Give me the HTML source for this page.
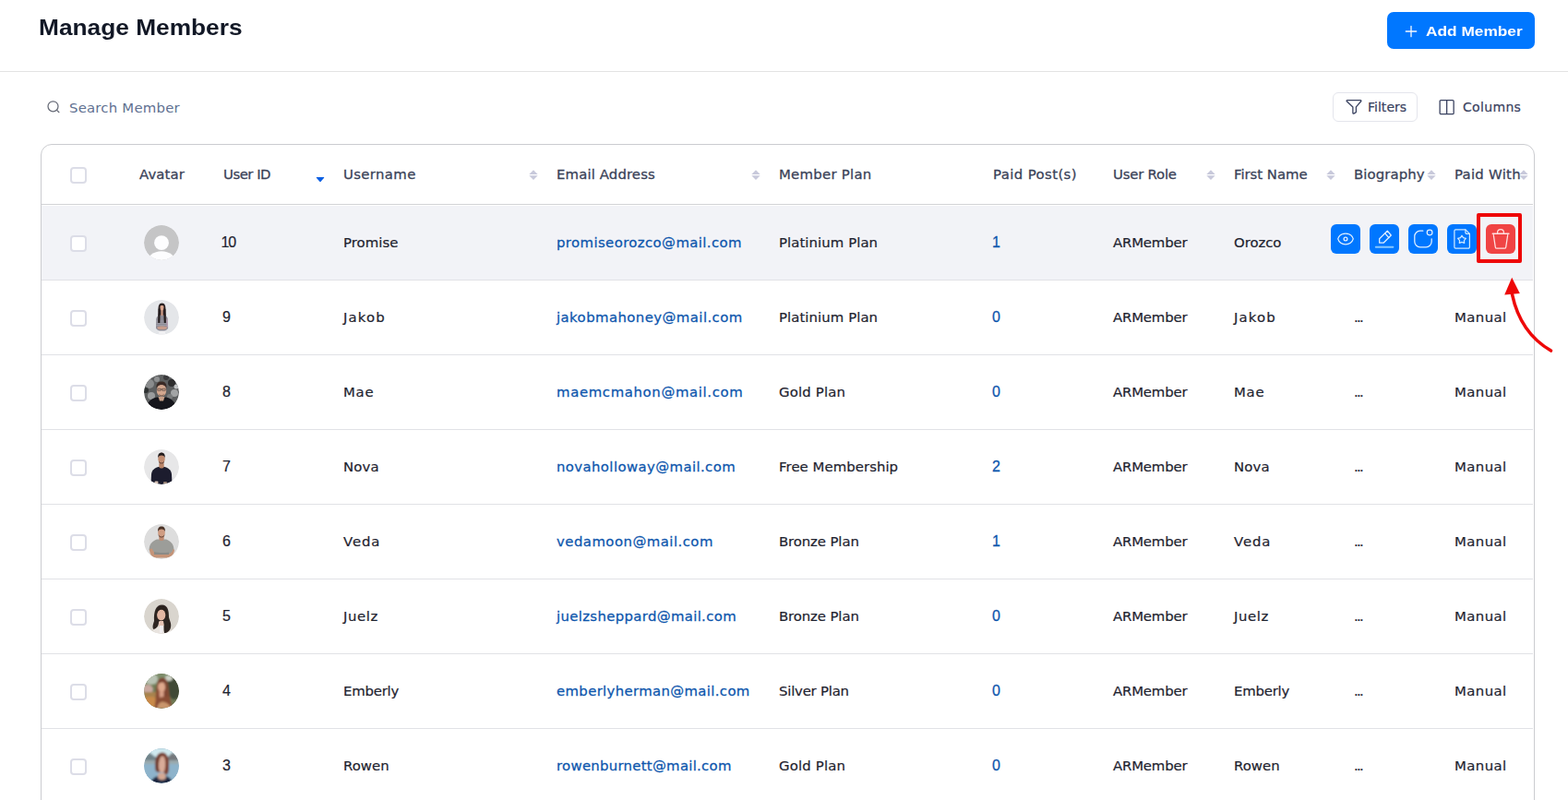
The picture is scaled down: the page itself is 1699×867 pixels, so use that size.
<!DOCTYPE html>
<html lang="en">
<head>
<meta charset="utf-8">
<title>Manage Members</title>
<style>
*{box-sizing:border-box;margin:0;padding:0}
html,body{width:1699px;height:867px;overflow:hidden;background:#fff}
body{font-family:"DejaVu Sans","Liberation Sans",sans-serif;font-size:14.9px;color:#1f2430;position:relative}
.topbar{position:absolute;left:0;top:0;width:1699px;height:78px;border-bottom:1px solid #e3e3e3;background:#fff}
.topbar h1{position:absolute;left:42px;top:13px;font-family:"Liberation Sans",sans-serif;font-weight:700;font-size:24px;line-height:34px;color:#121826;white-space:nowrap}
.topbar h1 span{display:inline-block;transform:scaleX(1.095);transform-origin:0 50%}
.add-btn{position:absolute;left:1503px;top:13px;width:160px;height:40px;border-radius:7px;background:#0077ff;color:#fff;font-family:"Liberation Sans",sans-serif;font-weight:700;font-size:15.5px;line-height:40px;white-space:nowrap}
.add-btn svg{position:absolute;left:19px;top:14px}
.add-btn span{position:absolute;left:42px;top:1px;transform:scaleX(1.115);transform-origin:0 50%}
.toolbar{position:absolute;left:0;top:78px;width:1699px;height:78px}
.search{position:absolute;left:51px;top:31px;height:16px}
.search svg{position:absolute;left:0;top:0}
.search span{position:absolute;left:24px;top:-1px;line-height:18px;color:#617191;white-space:nowrap}
.tbtn{position:absolute;top:22px;height:32px;border-radius:6px;font-size:14px;line-height:30px;color:#3a4260;white-space:nowrap}
.tbtn svg{position:absolute;top:6px}
.tbtn span{position:absolute;top:0;-webkit-text-stroke:.22px currentColor}
.filters{left:1444px;width:92px;border:1px solid #e4e5ec}
.filters svg{left:13px}
.filters span{left:37px}
.columns{left:1546px;width:116px;border:1px solid transparent}
.columns svg{left:12px}
.columns span{left:38px}
.grid{position:absolute;left:44px;top:156px;width:1619px;height:730px;border:1px solid #cbccd0;border-radius:12px;overflow:hidden;background:#fff}
table{border-collapse:separate;border-spacing:0;table-layout:fixed;width:1616px}
th span,td span{display:inline-block;-webkit-text-stroke:.22px currentColor}
th span{-webkit-text-stroke-width:.28px}
td a span,td.num span{-webkit-text-stroke-width:.26px}
th,td{text-align:left;vertical-align:middle;padding:0 0 0 11px;white-space:nowrap;overflow:visible;position:relative}
thead th{height:65px;font-weight:400;color:#3a4258;border-bottom:1px solid #d2d3d6;font-size:14.9px}
tbody td{height:81px;border-bottom:1px solid #e1e2e6;color:#1f2430}
tbody tr:first-child td{height:82px;border-top:1px solid #fff}
tbody tr.hov td{background:#f2f3f7}
td a{color:#0d56ad;text-decoration:none}
td.num{color:#0d56ad}
.n{font-family:"Liberation Sans",sans-serif;font-size:16px;position:relative;top:0;margin-left:-1px}
.cb{display:block;width:18px;height:18px;border:2px solid #dcdde7;border-radius:4px;background:#fff;margin-left:20px;position:relative;top:1px}
.av{display:block;width:38px;height:38px;border-radius:50%;overflow:hidden;margin-left:5px}
.av svg{display:block}
.sort{position:absolute;right:9.5px;top:27px;width:10px;height:12px;overflow:visible}
th.last .sort{right:5px}
.actions{position:absolute;left:1397px;top:86px;width:220px;height:32px}
.ab{position:absolute;top:0;width:32px;height:32px;border-radius:6px;background:#0077ff}
.ab.del{background:#f04444}
.ab svg{position:absolute;left:0;top:0}
.hl{position:absolute;left:1600px;top:231px;width:49px;height:54px;border:4px solid #ee0808;border-radius:2px}
.arrow{position:absolute;left:1620px;top:295px}
</style>
</head>
<body>
<div class="topbar">
  <h1><span>Manage Members</span></h1>
  <div class="add-btn">
    <svg width="14" height="14" viewBox="0 0 14 14"><path d="M7 1.3v11.4M1.3 7h11.4" stroke="#f4f9ff" stroke-width="1.3" stroke-linecap="round" fill="none"/></svg>
    <span>Add Member</span>
  </div>
</div>
<div class="toolbar">
  <div class="search">
    <svg width="16" height="16" viewBox="0 0 16 16"><circle cx="6.5" cy="6.3" r="5.5" fill="none" stroke="#666a76" stroke-width="1.25"/><path d="M10.6 10.4l2.3 2.3" stroke="#666a76" stroke-width="1.25" stroke-linecap="round"/></svg>
    <span style="letter-spacing:0.21px">Search Member</span>
  </div>
  <div class="tbtn filters">
    <svg width="18" height="18" viewBox="0 0 18 18"><path d="M1.7 1.7h14.6a.6.6 0 0 1 .45 1l-5.35 6.2v5.3a.8.8 0 0 1-.4.7l-2.2 1.2a.6.6 0 0 1-.9-.5V8.9L1.25 2.7a.6.6 0 0 1 .45-1z" fill="none" stroke="#3a4260" stroke-width="1.3" stroke-linejoin="round"/></svg>
    <span style="letter-spacing:0.02px">Filters</span>
  </div>
  <div class="tbtn columns">
    <svg width="18" height="18" viewBox="0 0 18 18"><rect x="1.15" y="1.65" width="15" height="15" rx="1.2" fill="none" stroke="#3a4260" stroke-width="1.3"/><path d="M8.65 1.65v15" stroke="#3a4260" stroke-width="1.3"/></svg>
    <span style="letter-spacing:0.33px">Columns</span>
  </div>
</div>
<div class="grid">
<table>
<colgroup><col style="width:95px"><col style="width:91px"><col style="width:130px"><col style="width:231px"><col style="width:241px"><col style="width:232px"><col style="width:130px"><col style="width:131px"><col style="width:130px"><col style="width:109px"><col style="width:96px"></colgroup>
<thead><tr>
<th><span class="cb"></span></th>
<th><span style="letter-spacing:0.12px">Avatar</span></th>
<th><span style="letter-spacing:-0.5px">User ID</span><svg class="sort" viewBox="0 0 10 12"><path d="M1.2 8.1h7.6a.45.45 0 0 1 .33.76L5.4 12.9a.55.55 0 0 1-.8 0L.87 8.86a.45.45 0 0 1 .33-.760z" fill="#0a5fe3"/></svg></th>
<th><span style="letter-spacing:0.35px">Username</span><svg class="sort" viewBox="0 0 10 12"><path d="M5 .2 9.7 5.1H.3zM5 11.1.3 6.2h9.4z" fill="#c8c9db"/></svg></th>
<th><span style="letter-spacing:0.12px">Email Address</span><svg class="sort" viewBox="0 0 10 12"><path d="M5 .2 9.7 5.1H.3zM5 11.1.3 6.2h9.4z" fill="#c8c9db"/></svg></th>
<th><span style="letter-spacing:0.26px">Member Plan</span></th>
<th><span style="letter-spacing:0.39px">Paid Post(s)</span></th>
<th><span style="letter-spacing:-0.22px">User Role</span><svg class="sort" viewBox="0 0 10 12"><path d="M5 .2 9.7 5.1H.3zM5 11.1.3 6.2h9.4z" fill="#c8c9db"/></svg></th>
<th><span style="letter-spacing:-0.04px">First Name</span><svg class="sort" viewBox="0 0 10 12"><path d="M5 .2 9.7 5.1H.3zM5 11.1.3 6.2h9.4z" fill="#c8c9db"/></svg></th>
<th><span style="letter-spacing:0.09px">Biography</span><svg class="sort" viewBox="0 0 10 12"><path d="M5 .2 9.7 5.1H.3zM5 11.1.3 6.2h9.4z" fill="#c8c9db"/></svg></th>
<th class="last"><span style="letter-spacing:0.25px">Paid With</span><svg class="sort" viewBox="0 0 10 12"><path d="M5 .2 9.7 5.1H.3zM5 11.1.3 6.2h9.4z" fill="#c8c9db"/></svg></th>
</tr></thead>
<tbody>
<tr class="hov"><td><span class="cb"></span></td><td><span class="av"><svg width="38" height="38" viewBox="0 0 38 38"><defs><clipPath id="c10"><circle cx="19" cy="19" r="19"/></clipPath><filter id="f10" x="-20%" y="-20%" width="140%" height="140%"><feGaussianBlur stdDeviation="0.35"/></filter></defs><g clip-path="url(#c10)"><rect width="38" height="38" fill="#c5c5c6"/><g filter="url(#f10)" fill="#fdfdfe"><circle cx="19" cy="19.2" r="7.9"/><ellipse cx="19" cy="40.5" rx="15.5" ry="12.2"/></g></g></svg></span></td><td><span class="n" style="letter-spacing:-1.2px;margin-left:-2.5px">10</span></td><td><span style="letter-spacing:0.04px">Promise</span></td><td><a><span style="letter-spacing:0.39px">promiseorozco@mail.com</span></a></td><td><span style="letter-spacing:0.07px">Platinium Plan</span></td><td class="num"><span class="n">1</span></td><td><span style="letter-spacing:-0.17px">ARMember</span></td><td><span style="letter-spacing:-0.06px">Orozco</span></td><td></td><td></td></tr>
<tr><td><span class="cb"></span></td><td><span class="av"><svg width="38" height="38" viewBox="0 0 38 38"><defs><clipPath id="c9"><circle cx="19" cy="19" r="19"/></clipPath><filter id="f9" x="-20%" y="-20%" width="140%" height="140%"><feGaussianBlur stdDeviation="0.5"/></filter></defs><g clip-path="url(#c9)"><rect width="38" height="38" fill="#e4e6e9"/><g filter="url(#f9)"><path d="M16.2 33 L22.8 33 L23.2 38 L16 38 Z" fill="#f1f1f3"/><path d="M19.5 3.5 C22.8 3.5 23.6 7 23.5 11 C23.5 16 24.2 20 23.8 25 L15.3 25 C14.9 20 15.6 16 15.5 11 C15.4 7 16.2 3.5 19.5 3.5 Z" fill="#2b2224"/><path d="M13.2 21 C13.4 18.5 15 17.3 17.5 16.6 L21.6 16.6 C24 17.3 25.6 18.5 25.8 21 L26.1 30.5 C25.5 32.5 23.5 33.6 19.6 33.6 C15.6 33.6 13.6 32.5 13 30.5 Z" fill="#8d8b95"/><path d="M13.3 23 H25.9 M13.2 25.4 H26 M13.2 27.6 H26" stroke="#a9a7b2" stroke-width=".7" fill="none"/><path d="M24.3 21 L25.9 21 L26.1 30 L24.6 30 Z" fill="#b79bb0" opacity=".8"/><rect x="18.3" y="10.5" width="2.4" height="6.5" fill="#c99884"/><ellipse cx="19.5" cy="8.4" rx="2.1" ry="2.9" fill="#dba78f"/><path d="M17.3 7.5 C17.3 5.5 18.2 4.6 19.5 4.6 C20.8 4.6 21.7 5.5 21.7 7.5 C21 6.3 20.4 5.9 19.5 5.9 C18.6 5.9 18 6.3 17.3 7.5 Z" fill="#2b2224"/><path d="M15.6 10 L17.5 8 C17.3 12 17.8 18 17.3 25 L15.3 25 C15 20 15.7 15 15.6 10 Z" fill="#241b1d"/><path d="M23.4 10 L21.5 8 C21.7 12 21.2 18 21.8 25 L23.8 25 C24.1 20 23.3 15 23.4 10 Z" fill="#241b1d"/><path d="M14.5 29.2 C17 28.3 22 28.3 24.8 29.2 L24.6 31.4 C22 32.2 17 32.2 14.7 31.4 Z" fill="#c79c8c"/></g></g></svg></span></td><td><span class="n">9</span></td><td><span style="letter-spacing:1.14px">Jakob</span></td><td><a><span style="letter-spacing:0.42px">jakobmahoney@mail.com</span></a></td><td><span style="letter-spacing:0.07px">Platinium Plan</span></td><td class="num"><span class="n">0</span></td><td><span style="letter-spacing:-0.17px">ARMember</span></td><td><span style="letter-spacing:1.14px">Jakob</span></td><td><span class="dots" style="letter-spacing:-1.7px">...</span></td><td><span style="letter-spacing:0.42px">Manual</span></td></tr>
<tr><td><span class="cb"></span></td><td><span class="av"><svg width="38" height="38" viewBox="0 0 38 38"><defs><clipPath id="c8"><circle cx="19" cy="19" r="19"/></clipPath><filter id="f8" x="-20%" y="-20%" width="140%" height="140%"><feGaussianBlur stdDeviation="0.7"/></filter></defs><g clip-path="url(#c8)"><rect width="38" height="38" fill="#5d5f60"/><g filter="url(#f8)"><circle cx="6" cy="10" r="5" fill="#8a8c8d"/><circle cx="30" cy="9" r="4" fill="#2d2e2f"/><circle cx="33" cy="20" r="4" fill="#a2a4a5"/><circle cx="8" cy="23" r="4" fill="#9a9c9d"/><circle cx="14" cy="5" r="3" fill="#8f9192"/><circle cx="24" cy="3" r="3" fill="#3a3b3c"/><circle cx="2" cy="17" r="3" fill="#2f3031"/><circle cx="35" cy="13" r="2.5" fill="#c2c4c5"/><circle cx="28" cy="24" r="3" fill="#7a7c7d"/><path d="M2 38 C3 29 9 25.5 14 24.5 L24 24.5 C29 25.5 34 29 36 38 Z" fill="#15161a"/><path d="M15.5 24 L22.5 24 L21 28.5 L17 28.5 Z" fill="#c79f88"/><ellipse cx="19" cy="17" rx="5.2" ry="6.6" fill="#d3a78f"/><path d="M13.6 15 C13 10 15 7.5 19 7.5 C23 7.5 25 10 24.4 15 C23.5 12 21.5 11 19 11 C16.5 11 14.5 12 13.6 15 Z" fill="#3a2a25"/><path d="M14.8 15.3h3.3v2h-3.3zM19.9 15.3h3.3v2h-3.3zM18.1 15.9h1.8" fill="none" stroke="#2c2424" stroke-width=".6" opacity=".85"/><path d="M16 21 C17.5 22.5 20.5 22.5 22 21 L21.5 22.5 C20.5 23.5 17.5 23.5 16.5 22.5 Z" fill="#8c6a5a"/></g></g></svg></span></td><td><span class="n">8</span></td><td><span style="letter-spacing:0.76px">Mae</span></td><td><a><span style="letter-spacing:0.63px">maemcmahon@mail.com</span></a></td><td><span style="letter-spacing:0.16px">Gold Plan</span></td><td class="num"><span class="n">0</span></td><td><span style="letter-spacing:-0.17px">ARMember</span></td><td><span style="letter-spacing:0.76px">Mae</span></td><td><span class="dots" style="letter-spacing:-1.7px">...</span></td><td><span style="letter-spacing:0.42px">Manual</span></td></tr>
<tr><td><span class="cb"></span></td><td><span class="av"><svg width="38" height="38" viewBox="0 0 38 38"><defs><clipPath id="c7"><circle cx="19" cy="19" r="19"/></clipPath><filter id="f7" x="-20%" y="-20%" width="140%" height="140%"><feGaussianBlur stdDeviation="0.6"/></filter></defs><g clip-path="url(#c7)"><rect width="38" height="38" fill="#e7e7e8"/><g filter="url(#f7)"><path d="M7.5 38 L8 27 C8.5 22 12 20 15.5 19 L22.5 19 C26 20 29.5 22 30 27 L30.5 38 Z" fill="#1c1e2d"/><rect x="16.3" y="14" width="5.4" height="6.5" rx="2" fill="#b98468"/><ellipse cx="19" cy="10.5" rx="3.7" ry="4.8" fill="#c18c70"/><path d="M15.2 9.5 C14.8 5.5 16.5 3.5 19 3.5 C21.5 3.5 23.2 5.5 22.8 9.5 C22.3 7.5 21 6.6 19 6.6 C17 6.6 15.7 7.5 15.2 9.5 Z" fill="#241c1c"/><path d="M16 12.5 C17 15 21 15 22 12.5 L21.8 14 C21 16 17 16 16.2 14 Z" fill="#6b4a3c"/><rect x="11.5" y="34.5" width="4" height="2.5" rx="1" fill="#d9c4b8"/><rect x="21" y="35" width="4" height="2.5" rx="1" fill="#9a8478"/></g></g></svg></span></td><td><span class="n">7</span></td><td><span style="letter-spacing:0.17px">Nova</span></td><td><a><span style="letter-spacing:0.39px">novaholloway@mail.com</span></a></td><td><span style="letter-spacing:0.05px">Free Membership</span></td><td class="num"><span class="n">2</span></td><td><span style="letter-spacing:-0.17px">ARMember</span></td><td><span style="letter-spacing:0.17px">Nova</span></td><td><span class="dots" style="letter-spacing:-1.7px">...</span></td><td><span style="letter-spacing:0.42px">Manual</span></td></tr>
<tr><td><span class="cb"></span></td><td><span class="av"><svg width="38" height="38" viewBox="0 0 38 38"><defs><clipPath id="c6"><circle cx="19" cy="19" r="19"/></clipPath><filter id="f6" x="-20%" y="-20%" width="140%" height="140%"><feGaussianBlur stdDeviation="0.6"/></filter></defs><g clip-path="url(#c6)"><rect width="38" height="38" fill="#dddddd"/><g filter="url(#f6)"><path d="M5.5 28 C6 21 9 18.5 14 16.5 L24 16.5 C29 18.5 32 21 32.5 28 L29 32 L9 32 Z" fill="#9c9d99"/><path d="M6 27 L9 26.5 C10 30 12 32.5 18 33 L28 32 C30 31 31 29 31.5 27 L33 28 C32.5 33 30 36 24 36.5 L13 36.5 C8 36 6 32 6 27 Z" fill="#c59478"/><path d="M11 30 C15 31 22 31.5 27 30.5 L27 33 L11 33 Z" fill="#8a8b87"/><rect x="16.3" y="12.5" width="5.4" height="5.5" rx="2" fill="#c08c72"/><ellipse cx="19" cy="9.2" rx="3.8" ry="4.8" fill="#cf9c82"/><path d="M15.1 8.5 C14.6 4.3 16.4 2.6 19 2.6 C21.6 2.6 23.4 4.3 22.9 8.5 C22.4 6.4 21 5.6 19 5.6 C17 5.6 15.6 6.4 15.1 8.5 Z" fill="#4a3328"/><path d="M15.6 10.5 C16.5 14.5 21.5 14.5 22.4 10.5 L22.2 12.5 C21.3 15.3 16.7 15.3 15.8 12.5 Z" fill="#6e4a3a"/></g></g></svg></span></td><td><span class="n">6</span></td><td><span style="letter-spacing:0.91px">Veda</span></td><td><a><span style="letter-spacing:0.46px">vedamoon@mail.com</span></a></td><td><span style="letter-spacing:-0.11px">Bronze Plan</span></td><td class="num"><span class="n">1</span></td><td><span style="letter-spacing:-0.17px">ARMember</span></td><td><span style="letter-spacing:0.91px">Veda</span></td><td><span class="dots" style="letter-spacing:-1.7px">...</span></td><td><span style="letter-spacing:0.42px">Manual</span></td></tr>
<tr><td><span class="cb"></span></td><td><span class="av"><svg width="38" height="38" viewBox="0 0 38 38"><defs><clipPath id="c5"><circle cx="19" cy="19" r="19"/></clipPath><filter id="f5" x="-20%" y="-20%" width="140%" height="140%"><feGaussianBlur stdDeviation="0.7"/></filter></defs><g clip-path="url(#c5)"><rect width="38" height="38" fill="#d9d5ce"/><g filter="url(#f5)"><path d="M9 38 C10 32 14 30 18.5 29.5 C24 30 29 32 31 38 Z" fill="#e9e4df"/><path d="M11 24 C10.5 13 13 6.5 19.5 6.5 C26 6.5 27 13 27 20 C28 24 30 27 29 31 C28 35 25 37 22 37 C21 33 22 29 21 25 L16 25 C16 29 14 32 10.5 33 C8.5 31 10 27 11 24 Z" fill="#2f2521"/><ellipse cx="18.7" cy="17.5" rx="4.6" ry="6" fill="#e3b7a3"/><path d="M14 16 C14 10.5 16.5 8 19.5 8 C22.5 8 24.5 10.5 24.5 16 C23 13 21.5 11.5 19 11.5 C16.5 11.5 15 13 14 16 Z" fill="#2a201d"/><path d="M16.5 24 L21 24 L21.5 29 L18.5 33 L16 29 Z" fill="#e8c5b6"/><path d="M17 29 L21 29 L20 37 L17 37 Z" fill="#f2eef0"/></g></g></svg></span></td><td><span class="n">5</span></td><td><span style="letter-spacing:0.62px">Juelz</span></td><td><a><span style="letter-spacing:0.33px">juelzsheppard@mail.com</span></a></td><td><span style="letter-spacing:-0.11px">Bronze Plan</span></td><td class="num"><span class="n">0</span></td><td><span style="letter-spacing:-0.17px">ARMember</span></td><td><span style="letter-spacing:0.62px">Juelz</span></td><td><span class="dots" style="letter-spacing:-1.7px">...</span></td><td><span style="letter-spacing:0.42px">Manual</span></td></tr>
<tr><td><span class="cb"></span></td><td><span class="av"><svg width="38" height="38" viewBox="0 0 38 38"><defs><clipPath id="c4"><circle cx="19" cy="19" r="19"/></clipPath><filter id="f4" x="-20%" y="-20%" width="140%" height="140%"><feGaussianBlur stdDeviation="0.8"/></filter></defs><g clip-path="url(#c4)"><rect width="38" height="38" fill="#6f7a55"/><g filter="url(#f4)"><rect x="0" y="0" width="38" height="12" fill="#7d8e6c"/><ellipse cx="8" cy="6" rx="7" ry="6" fill="#b9c3b4"/><ellipse cx="33" cy="14" rx="8" ry="14" fill="#3f4a34"/><ellipse cx="4" cy="17" rx="6" ry="5" fill="#c9a9a0"/><rect x="0" y="20" width="16" height="18" fill="#a8834e"/><ellipse cx="7" cy="31" rx="9" ry="6" fill="#c98a4a"/><ellipse cx="27" cy="5" rx="4" ry="3" fill="#cfd3c8"/><path d="M12.5 30 C13 20 13 12 15.5 7 C17.5 3.5 22.5 3.5 24.5 7 C27 12 26.5 20 28 26 C29 30 30 33 30 38 L12 38 C11.5 35 12 33 12.5 30 Z" fill="#8a4d35"/><path d="M14 38 C15 33 17 31 20 30.5 C24 31 28 33 29.5 38 Z" fill="#c9956c"/><ellipse cx="19.2" cy="14.3" rx="4" ry="5.8" fill="#e0a98d"/><path d="M15 12 C15.5 7 17.5 5 20 5 C23 5 25 8 25 14 C25 18 24.5 21 25.5 25 L22 24 C23 20 23.5 15 22.5 11 C21 9 18 9 15 12 Z" fill="#7a4330"/><path d="M16.5 19.5 L21.5 19.5 L21.5 25 L17 26 Z" fill="#d8a088"/></g></g></svg></span></td><td><span class="n">4</span></td><td><span style="letter-spacing:-0.22px">Emberly</span></td><td><a><span style="letter-spacing:0.34px">emberlyherman@mail.com</span></a></td><td><span style="letter-spacing:-0.22px">Silver Plan</span></td><td class="num"><span class="n">0</span></td><td><span style="letter-spacing:-0.17px">ARMember</span></td><td><span style="letter-spacing:-0.22px">Emberly</span></td><td><span class="dots" style="letter-spacing:-1.7px">...</span></td><td><span style="letter-spacing:0.42px">Manual</span></td></tr>
<tr><td><span class="cb"></span></td><td><span class="av"><svg width="38" height="38" viewBox="0 0 38 38"><defs><clipPath id="c3"><circle cx="19" cy="19" r="19"/></clipPath><filter id="f3" x="-20%" y="-20%" width="140%" height="140%"><feGaussianBlur stdDeviation="0.8"/></filter></defs><g clip-path="url(#c3)"><rect width="38" height="38" fill="#8fb2c6"/><g filter="url(#f3)"><rect x="0" y="0" width="38" height="9" fill="#cfe9ef"/><path d="M0 10 L6 4.5 L13 10 L13 15 L0 15 Z" fill="#6f8288"/><path d="M25 10 L31 4.5 L38 9 L38 15 L25 15 Z" fill="#75787c"/><rect x="0" y="13" width="38" height="4" fill="#9aa9ad"/><rect x="0" y="17" width="38" height="21" fill="#8db3cb"/><path d="M7 38 C8 33 12 30.5 16 30 L23 30 C27 30.5 30 33 31 38 Z" fill="#1c2740"/><path d="M15.5 27 L22.5 27 L24 32 C22 35 17 35 15 32 Z" fill="#d4a893"/><path d="M12.5 24 C11 14 13 4.5 19.5 4.5 C26 4.5 27.5 12 27 21 C27 25 26 28.5 24 29 L21.5 26 L16.5 25.5 C15.5 26 14 26 12.5 24 Z" fill="#7a4030"/><path d="M15.5 12 C16.5 8.5 20 7.5 22 9.5 C23.5 13 23.5 19 22.5 23.5 C21.5 26.5 19 27 17.5 25.5 C15.5 22.5 15 16 15.5 12 Z" fill="#d9ab98"/><path d="M14 13 C15 7 18 5.5 20.5 6 C18.5 8 16.5 11 16 16 C15.5 19 15.8 22 16.5 25 L13.5 24 C12.8 20 13.2 16 14 13 Z" fill="#6c3829"/></g></g></svg></span></td><td><span class="n">3</span></td><td><span style="letter-spacing:0.04px">Rowen</span></td><td><a><span style="letter-spacing:0.27px">rowenburnett@mail.com</span></a></td><td><span style="letter-spacing:0.16px">Gold Plan</span></td><td class="num"><span class="n">0</span></td><td><span style="letter-spacing:-0.17px">ARMember</span></td><td><span style="letter-spacing:0.04px">Rowen</span></td><td><span class="dots" style="letter-spacing:-1.7px">...</span></td><td><span style="letter-spacing:0.42px">Manual</span></td></tr>
</tbody>
</table>
<div class="actions">
  <div class="ab" style="left:0"><svg width="32" height="32" viewBox="0 0 32 32" fill="none" stroke="#e3f1ff" stroke-width="1.25" stroke-linecap="round" stroke-linejoin="round"><path d="M7.7 15.9C8.8 12.5 12.1 10 16 10s7.2 2.5 8.3 5.9c-1.1 3.4-4.4 5.9-8.3 5.9s-7.2-2.5-8.3-5.9z"/><circle cx="16" cy="15.9" r="1.9"/></svg></div>
  <div class="ab" style="left:42px"><svg width="32" height="32" viewBox="0 0 32 32" fill="none" stroke="#e3f1ff" stroke-width="1.25" stroke-linecap="round" stroke-linejoin="round"><path d="M19.3 7.2l4 4.8-8.2 8.2h-4.4v-4.4z"/><path d="M16.7 9.9l4.2 4.7"/><path d="M6.8 24.8h18.6" stroke="#85c6ff" stroke-width="2"/></svg></div>
  <div class="ab" style="left:84px"><svg width="32" height="32" viewBox="0 0 32 32" fill="none" stroke="#e3f1ff" stroke-width="1.25" stroke-linecap="round" stroke-linejoin="round"><path d="M15.8 7.2h-3a6 6 0 0 0-6 6v5.6a6 6 0 0 0 6 6h6.4a6 6 0 0 0 6-6v-3"/><circle cx="23.1" cy="8.9" r="2.85"/></svg></div>
  <div class="ab" style="left:126px"><svg width="32" height="32" viewBox="0 0 32 32" fill="none" stroke="#cfe8ff" stroke-width="1.25" stroke-linecap="round" stroke-linejoin="round"><path d="M9.3 5.9h10.6l4.5 4.5v14.4a1.4 1.4 0 0 1-1.4 1.4H9.3a1.4 1.4 0 0 1-1.4-1.4V7.3a1.4 1.4 0 0 1 1.4-1.4z"/><path d="M19.9 5.9v3.1a1.4 1.4 0 0 0 1.4 1.4h3.1"/><path d="M16 12.2 17.5 14.69 20.33 15.34 18.43 17.54 18.67 20.43 16 19.3 13.33 20.43 13.57 17.54 11.67 15.34 14.5 14.69z"/></svg></div>
  <div class="ab del" style="left:168px"><svg width="32" height="32" viewBox="0 0 32 32" fill="none" stroke="#ffe1e1" stroke-width="1.25" stroke-linecap="round" stroke-linejoin="round"><path d="M7.3 10.2h17.6" stroke-width="1.6"/><path d="M12.6 10v-1a3.4 3.4 0 0 1 6.8 0v1"/><path d="M8.3 11.6l2 13.2a1.6 1.6 0 0 0 1.6 1.4h8.2a1.6 1.6 0 0 0 1.6-1.4l2-13.2"/></svg></div>
</div>
</div>
<div class="hl"></div>
<svg class="arrow" width="70" height="95" viewBox="0 0 70 95"><path d="M18.5 24 C 24 50, 38 72, 60.5 85" fill="none" stroke="#ee0808" stroke-width="3.6" stroke-linecap="round"/><path d="M18.2 5.8 L10.2 24.4 L26.8 23 Z" fill="#ee0808"/></svg>
</body>
</html>
